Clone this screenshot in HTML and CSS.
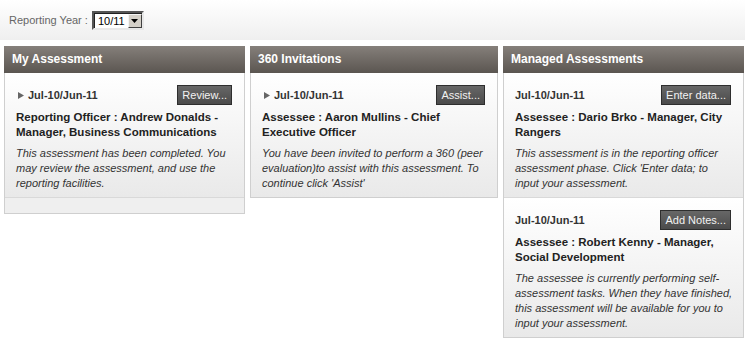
FILE: index.html
```html
<!DOCTYPE html>
<html lang="en">
<head>
    <meta charset="UTF-8">
    <title>Assessments</title>
    <link rel="stylesheet" href="styles.css">
</head>
<body>

<div class="toolbar">
    <label>Reporting Year :</label>
    <div class="year-select">
        <span class="year-value">10/11</span>
        <span class="year-arrow">
            <svg width="7" height="4" viewBox="0 0 7 4"><path d="M0 0h7L3.5 4z" fill="#000"/></svg>
        </span>
    </div>
</div>

<div class="columns">
    <div class="panel">
        <div class="panel-head">My Assessment</div>
        <div class="panel-body">
            <div class="item">
                <div class="item-top">
                    <span class="period"><svg class="caret" width="6" height="7" viewBox="0 0 6 7"><path d="M0 0l6 3.5L0 7z" fill="#666"/></svg>Jul-10/Jun-11</span>
                    <button>Review...</button>
                </div>
                <div class="item-title">Reporting Officer : Andrew Donalds - Manager, Business Communications</div>
                <p class="item-desc">This assessment has been completed. You<br>may review the assessment, and use the<br>reporting facilities.</p>
            </div>
            <div class="panel-foot"></div>
        </div>
    </div>

    <div class="panel">
        <div class="panel-head">360 Invitations</div>
        <div class="panel-body">
            <div class="item">
                <div class="item-top">
                    <span class="period"><svg class="caret" width="6" height="7" viewBox="0 0 6 7"><path d="M0 0l6 3.5L0 7z" fill="#666"/></svg>Jul-10/Jun-11</span>
                    <button>Assist...</button>
                </div>
                <div class="item-title">Assessee : Aaron Mullins - Chief Executive Officer</div>
                <p class="item-desc">You have been invited to perform a 360 (peer<br>evaluation)to assist with this assessment. To<br>continue click 'Assist'</p>
            </div>
        </div>
    </div>

    <div class="panel">
        <div class="panel-head">Managed Assessments</div>
        <div class="panel-body">
            <div class="item">
                <div class="item-top">
                    <span class="period">Jul-10/Jun-11</span>
                    <button>Enter data...</button>
                </div>
                <div class="item-title">Assessee : Dario Brko - Manager, City Rangers</div>
                <p class="item-desc">This assessment is in the reporting officer<br>assessment phase. Click 'Enter data; to<br>input your assessment.</p>
            </div>
            <div class="item">
                <div class="item-top">
                    <span class="period">Jul-10/Jun-11</span>
                    <button>Add Notes...</button>
                </div>
                <div class="item-title">Assessee : Robert Kenny - Manager, Social Development</div>
                <p class="item-desc">The assessee is currently performing self-<br>assessment tasks. When they have finished,<br>this assessment will be available for you to<br>input your assessment.</p>
            </div>
        </div>
    </div>
</div>

</body>
</html>
```

FILE: styles.css
```css
body {
    margin: 0;
    font-family: "Liberation Sans", Arial, sans-serif;
    font-size: 11px;
    color: #333333;
    background-color: #ffffff;
}
.toolbar {
    height: 40px;
    display: flex;
    align-items: center;
    padding-left: 9px;
    background: linear-gradient(#ffffff, #efefef);
}
.toolbar label {
    color: #666666;
    margin-right: 4px;
}
.year-select {
    display: flex;
    width: 48px;
    height: 15px;
    background-color: #ffffff;
    border: 2px solid;
    border-color: #555555 #e8e8e8 #e8e8e8 #555555;
    box-shadow: inset 1px 1px 0 #222222;
}
.year-value {
    flex: 1;
    padding: 1px 0 0 4px;
    color: #000000;
    line-height: 14px;
}
.year-arrow {
    width: 14px;
    margin: 1px 0 0 0;
    display: flex;
    align-items: center;
    justify-content: center;
    background-color: #d4d0c8;
    border: 1px solid;
    border-color: #f4f4f4 #404040 #404040 #f4f4f4;
    box-sizing: border-box;
}
.columns {
    display: grid;
    grid-template-columns: 241px 248px 241px;
    column-gap: 5px;
    padding: 6px 0 0 4px;
    align-items: start;
}
.panel-head {
    height: 27px;
    line-height: 27px;
    padding-left: 8px;
    color: #ffffff;
    font-size: 12px;
    font-weight: bold;
    background: linear-gradient(#857f7a, #5b5651);
}
.panel-body {
    border: 1px solid #cfcfcf;
    border-top: none;
}
.item {
    padding: 12px 12px 6px 11px;
    background: linear-gradient(#ffffff, #e9e9e9);
    border-bottom: 1px solid #d9d9d9;
}
.item:last-child {
    border-bottom: none;
}
.item-top {
    display: flex;
    justify-content: space-between;
    align-items: center;
    height: 20px;
}
.period {
    display: flex;
    align-items: center;
    font-weight: bold;
    color: #333333;
}
.caret {
    margin: 0 4px 0 2px;
}
button {
    height: 20px;
    padding: 0 4px;
    font-family: "Liberation Sans", Arial, sans-serif;
    font-size: 11px;
    color: #f2f2f2;
    background: linear-gradient(#676767, #4b4b4b);
    border: 1px solid #2e2e2e;
    cursor: pointer;
}
.item-title {
    margin-top: 5px;
    line-height: 15px;
    font-size: 11.5px;
    font-weight: bold;
    color: #222222;
}
.item-desc {
    margin: 6px 0 0 0;
    line-height: 15px;
    font-style: italic;
    white-space: nowrap;
    color: #333333;
}
.panel-foot {
    height: 15px;
    background-color: #efefef;
}
```
